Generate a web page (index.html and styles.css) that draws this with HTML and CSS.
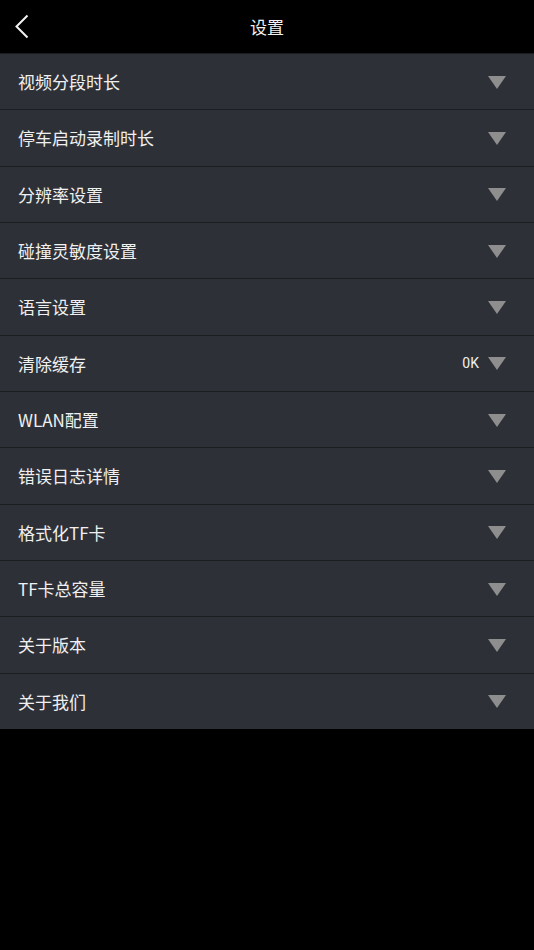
FILE: index.html
```html
<!DOCTYPE html>
<html lang="zh">
<head>
<meta charset="utf-8">
<link rel="stylesheet" href="styles.css">
</head>
<body>
<div class="page">
  <header class="topbar">
    <svg class="back" width="16" height="25" viewBox="0 0 16 25"><path d="M13.5 1.5 L2.5 12.5 L13.5 23.5" fill="none" stroke="#f2f2f2" stroke-width="2"/></svg>
    <div class="title">设置</div>
  </header>
  <ul class="list">
    <li class="row"><span class="label">视频分段时长</span><span class="right"><i class="tri"></i></span></li>
    <li class="row"><span class="label">停车启动录制时长</span><span class="right"><i class="tri"></i></span></li>
    <li class="row"><span class="label">分辨率设置</span><span class="right"><i class="tri"></i></span></li>
    <li class="row"><span class="label">碰撞灵敏度设置</span><span class="right"><i class="tri"></i></span></li>
    <li class="row"><span class="label">语言设置</span><span class="right"><i class="tri"></i></span></li>
    <li class="row"><span class="label">清除缓存</span><span class="right"><span class="value">0K</span><i class="tri"></i></span></li>
    <li class="row"><span class="label">WLAN配置</span><span class="right"><i class="tri"></i></span></li>
    <li class="row"><span class="label">错误日志详情</span><span class="right"><i class="tri"></i></span></li>
    <li class="row"><span class="label">格式化TF卡</span><span class="right"><i class="tri"></i></span></li>
    <li class="row"><span class="label">TF卡总容量</span><span class="right"><i class="tri"></i></span></li>
    <li class="row"><span class="label">关于版本</span><span class="right"><i class="tri"></i></span></li>
    <li class="row"><span class="label">关于我们</span><span class="right"><i class="tri"></i></span></li>
  </ul>
</div>
</body>
</html>
```

FILE: styles.css
```css
html, body {
  margin: 0;
  padding: 0;
  background: #000;
}
body {
  font-family: "Noto Sans CJK SC", "Roboto", sans-serif;
  color: #f0f0f0;
}
.page {
  width: 534px;
  height: 950px;
  background: #000;
}
.topbar {
  height: 53px;
  position: relative;
  display: flex;
  align-items: center;
  justify-content: center;
  background: #000;
}
.back {
  position: absolute;
  left: 14px;
  top: 14px;
}
.title {
  font-size: 17px;
  color: #f2f2f2;
  line-height: 1;
  margin-left: 0;
}
.list {
  list-style: none;
  margin: 0;
  padding: 0;
}
.row {
  box-sizing: border-box;
  height: 56.33px;
  border-top: 1.5px solid #1c1d21;
  background: #2e3038;
  display: flex;
  align-items: center;
  justify-content: space-between;
  padding: 0 28px 0 18px;
}
.label {
  font-size: 17px;
  line-height: 1;
  color: #f0f0f0;
}
.right {
  display: flex;
  align-items: center;
  gap: 9px;
}
.value {
  font-family: "Roboto", sans-serif;
  font-size: 14px;
  color: #f0f0f0;
  letter-spacing: 0;
}
.tri {
  display: block;
  width: 0;
  height: 0;
  border-left: 9.5px solid transparent;
  border-right: 9.5px solid transparent;
  border-top: 13px solid #8e8e8e;
  margin-top: 1px;
}
```
